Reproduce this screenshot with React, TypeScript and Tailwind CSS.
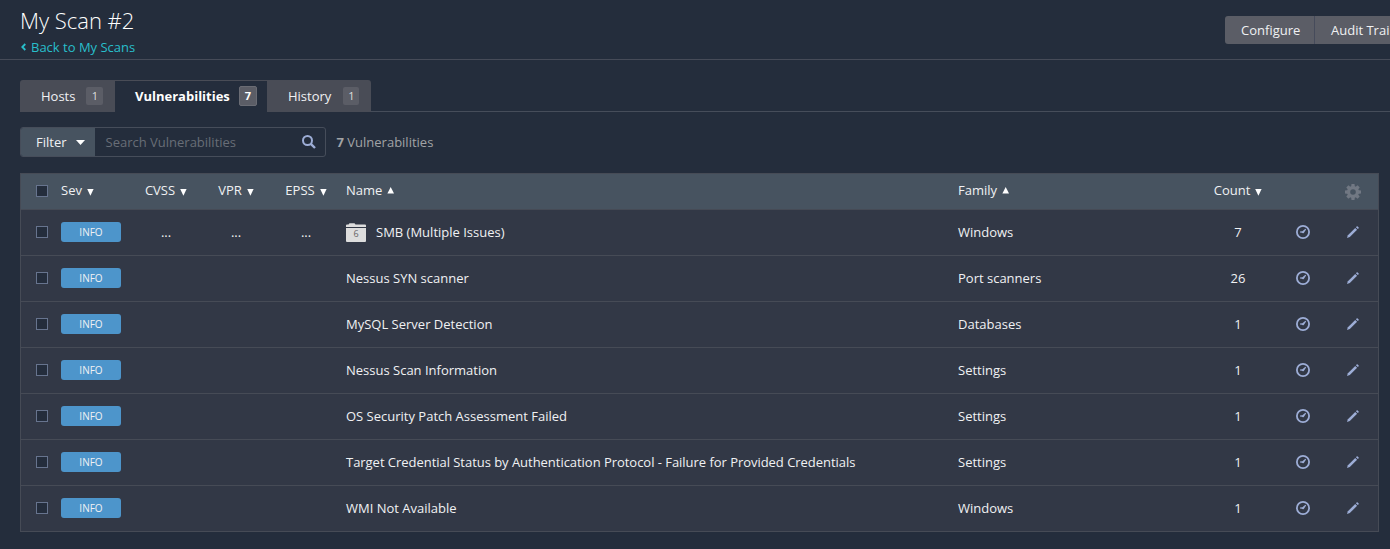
import React from "react";

const GRID =
  "grid grid-cols-[35px_75px_70px_70px_70px_612px_245px_80px_50px_50px] items-center pb-[2px]";

type Row = { name: string; family: string; count: number; group?: number };

const rows: Row[] = [
  { name: "SMB (Multiple Issues)", family: "Windows", count: 7, group: 6 },
  { name: "Nessus SYN scanner", family: "Port scanners", count: 26 },
  { name: "MySQL Server Detection", family: "Databases", count: 1 },
  { name: "Nessus Scan Information", family: "Settings", count: 1 },
  { name: "OS Security Patch Assessment Failed", family: "Settings", count: 1 },
  {
    name: "Target Credential Status by Authentication Protocol - Failure for Provided Credentials",
    family: "Settings",
    count: 1,
  },
  { name: "WMI Not Available", family: "Windows", count: 1 },
];

function Arrow({ up = false }: { up?: boolean }) {
  return up ? (
    <svg width="7" height="7" viewBox="0 0 7 7" className="ml-[5px] shrink-0" fill="#fff">
      <path d="M3.7 0 L7 6.6 H.4 Z" />
    </svg>
  ) : (
    <svg width="7" height="7" viewBox="0 0 7 7" className="mt-[4px] ml-[5px] shrink-0" fill="#fff">
      <path d="M.2 0 H6.6 L3.4 6.8 Z" />
    </svg>
  );
}

function Checkbox() {
  return <span className="ml-[15px] block size-3 border border-[#67748e] bg-[#242d3c]" />;
}

function Folder({ n }: { n: number }) {
  return (
    <span className="relative mt-px mr-[10px] block h-[19px] w-5">
      <svg width="20" height="19" viewBox="0 0 20 19" fill="#dddddd" className="block">
        <path d="M0 4V2.4Q0 1.4 1 1.4H2.5L3.5 .2H8.5L9.5 1.4H19Q20 1.4 20 2.4V4Z" />
        <path d="M0 5H20V18Q20 19 19 19H1Q0 19 0 18Z" />
      </svg>
      <span className="absolute inset-x-0 top-[4px] text-center text-[9px] leading-[13px] text-[#666]">
        {n}
      </span>
    </span>
  );
}

function Clock() {
  return (
    <svg width="14" height="14" viewBox="0 0 14 14" fill="none" className="mx-auto block">
      <circle cx="7" cy="7" r="6.1" stroke="#9dadd6" strokeWidth="1.8" />
      <path d="M4 6.6L6.4 6.3L9.4 3.7L10.1 4.4L7.8 7.9Q6.8 8.7 5.9 7.8L4 7.6Z" fill="#9dadd6" />
    </svg>
  );
}

function Pencil() {
  return (
    <svg width="12" height="12" viewBox="0 0 12 12" fill="#9dadd6" className="mx-auto block">
      <path d="M0 12L.9 9.2L8.2 1.9L10.1 3.8L2.8 11.1Z" />
      <path d="M8.9 1.2L9.6.5Q10.1 0 10.7.5L11.5 1.3Q12 1.9 11.5 2.4L10.8 3.1Z" />
    </svg>
  );
}

function Gear() {
  return (
    <svg width="16" height="16" viewBox="0 0 16 16" className="mx-auto mt-[2px] block">
      <g fill="#717883">
        <path d="M6.5 0H9.5L10 4H6Z" />
        <path d="M6.5 0H9.5L10 4H6Z" transform="rotate(45 8 8)" />
        <path d="M6.5 0H9.5L10 4H6Z" transform="rotate(90 8 8)" />
        <path d="M6.5 0H9.5L10 4H6Z" transform="rotate(135 8 8)" />
        <path d="M6.5 0H9.5L10 4H6Z" transform="rotate(180 8 8)" />
        <path d="M6.5 0H9.5L10 4H6Z" transform="rotate(225 8 8)" />
        <path d="M6.5 0H9.5L10 4H6Z" transform="rotate(270 8 8)" />
        <path d="M6.5 0H9.5L10 4H6Z" transform="rotate(315 8 8)" />
      </g>
      <circle cx="8" cy="8" r="4.4" fill="none" stroke="#717883" strokeWidth="3.2" />
    </svg>
  );
}

function Head({ label, up, className }: { label: string; up?: boolean; className: string }) {
  return (
    <div className={`flex items-center pb-px ${className}`}>
      {label}
      <Arrow up={up} />
    </div>
  );
}

export default function App() {
  return (
    <div className="h-[549px] w-[1390px] overflow-hidden bg-[#242d3c] font-['Open_Sans',sans-serif] text-[13px] leading-[18px] text-[#f0f1f3]">
      <header className="flex h-[60px] justify-between border-b border-[#464b58] pl-5">
        <div>
          <h1 className="mt-[5px] text-[22px] leading-[30px] font-light text-white">My Scan #2</h1>
          <a className="mt-[3px] flex items-center text-[#28bfcb]">
            <svg width="5" height="8" viewBox="0 0 5 8" fill="none" className="mr-[5px] ml-px">
              <path d="M4.3 1L1.3 4L4.3 7" stroke="#28bfcb" strokeWidth="1.8" />
            </svg>
            Back to My Scans
          </a>
        </div>
        <div className="mt-4 flex h-7 w-[165px] overflow-hidden rounded-l-[3px] bg-[#5b5d66] leading-7 whitespace-nowrap">
          <span className="w-[90px] shrink-0 border-r border-[#464b5b] pl-4">Configure</span>
          <span className="shrink-0 pl-4">Audit Trail</span>
        </div>
      </header>

      <nav className="mt-5 ml-5 flex h-8 border-b border-[#464d5a]">
        <div className="flex h-8 w-[95px] items-center rounded-tl-[3px] bg-[#494c56] pl-[21px]">
          Hosts
          <span className="ml-[11px] h-[18px] w-[17px] rounded-[2px] bg-[#5b5d66] text-center text-[11px] text-[#ddd]">1</span>
        </div>
        <div className="flex h-8 w-[152px] items-center border-t border-[#494c56] bg-[#242d3c] pb-px pl-5 font-bold text-white">
          Vulnerabilities
          <span className="ml-[9px] h-5 w-[18px] rounded-[2px] border border-[#6a6c74] bg-[#5b5d66] text-center text-[11px] leading-[18px]">7</span>
        </div>
        <div className="flex h-8 w-[104px] items-center rounded-tr-[3px] bg-[#494c56] pl-[21px]">
          History
          <span className="ml-3 h-[18px] w-4 rounded-[2px] bg-[#5b5d66] text-center text-[11px] text-[#ddd]">1</span>
        </div>
      </nav>

      <div className="mt-[15px] ml-5 flex h-[30px] items-center">
        <div className="flex h-[30px] w-[306px] items-center overflow-hidden rounded-[3px] border border-[#464d5a]">
          <div className="flex h-full w-[74px] items-center bg-[#475360] pl-[15px]">
            Filter
            <svg width="9" height="5" viewBox="0 0 9 5" fill="#fff" className="ml-[9px]">
              <path d="M0 0H9L4.5 5Z" />
            </svg>
          </div>
          <span className="w-[207px] pl-[10.5px] text-[#686d77]">Search Vulnerabilities</span>
          <svg width="14" height="14" viewBox="0 0 14 14" fill="none" stroke="#9dadd6">
            <circle cx="5.5" cy="5.5" r="4.5" strokeWidth="2" />
            <path d="M8.8 8.8L13 13" strokeWidth="2.4" />
          </svg>
        </div>
        <span className="ml-[10.5px] text-[#a1a3a6]">
          <b>7</b> Vulnerabilities
        </span>
      </div>

      <main className="mt-4 ml-5 w-[1359px] border border-b-0 border-[#464b56]">
        <div className={`${GRID} h-9 border-b border-[#464b56] bg-[#475360]`}>
          <Checkbox />
          <Head label="Sev" className="pl-[5px]" />
          <Head label="CVSS" className="justify-center" />
          <Head label="VPR" className="justify-center" />
          <Head label="EPSS" className="justify-center" />
          <Head label="Name" up className="pl-[5px]" />
          <Head label="Family" up className="pl-[5px]" />
          <Head label="Count" className="justify-center" />
          <span />
          <Gear />
        </div>
        {rows.map((r) => (
          <div key={r.name} className={`${GRID} h-[46px] border-b border-[#464b56] bg-[#323846]`}>
            <Checkbox />
            <span className="ml-[5px] h-5 w-[60px] rounded-[3px] bg-[#4d95cb] text-center text-[10px] leading-5">
              INFO
            </span>
            <span className="text-center">{r.group ? "..." : ""}</span>
            <span className="text-center">{r.group ? "..." : ""}</span>
            <span className="text-center">{r.group ? "..." : ""}</span>
            <span className={`flex items-center pl-[5px] ${r.name.length > 60 ? "tracking-[-0.035px]" : ""}`}>
              {r.group && <Folder n={r.group} />}
              {r.name}
            </span>
            <span className="pl-[5px]">{r.family}</span>
            <span className="text-center">{r.count}</span>
            <Clock />
            <Pencil />
          </div>
        ))}
      </main>
    </div>
  );
}
